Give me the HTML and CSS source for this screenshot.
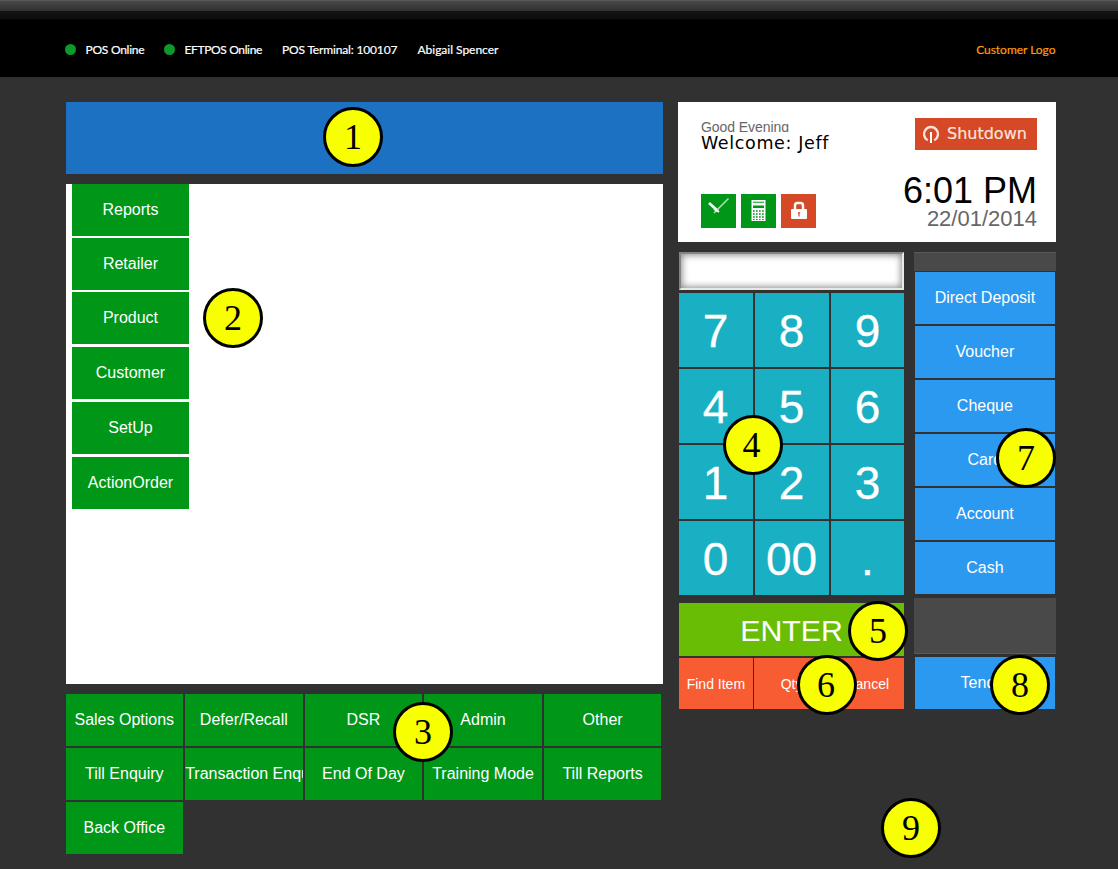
FILE: index.html
```html
<!DOCTYPE html>
<html lang="en">
<head>
<meta charset="utf-8">
<title>POS Terminal</title>
<link rel="stylesheet" href="styles.css">
</head>
<body>
<header class="topbar">
  <div class="status">
    <span class="dot"></span><span class="item pos">POS Online</span>
    <span class="dot"></span><span class="item eft">EFTPOS Online</span>
    <span class="item term">POS Terminal: 100107</span>
    <span class="item user">Abigail Spencer</span>
  </div>
  <div class="logo">Customer Logo</div>
</header>
<main class="page">
  <section class="left">
    <div class="banner"></div>
    <div class="workspace">
      <button class="btn green">Reports</button>
      <button class="btn green">Retailer</button>
      <button class="btn green">Product</button>
      <button class="btn green low">Customer</button>
      <button class="btn green low">SetUp</button>
      <button class="btn green low">ActionOrder</button>
    </div>
    <div class="functions">
      <button class="btn green">Sales Options</button>
      <button class="btn green">Defer/Recall</button>
      <button class="btn green">DSR</button>
      <button class="btn green">Admin</button>
      <button class="btn green">Other</button>
      <button class="btn green">Till Enquiry</button>
      <button class="btn green clipped">Transaction Enquiry</button>
      <button class="btn green">End Of Day</button>
      <button class="btn green">Training Mode</button>
      <button class="btn green">Till Reports</button>
      <button class="btn green">Back Office</button>
    </div>
  </section>
  <section class="right">
    <div class="welcome">
      <div class="welcome-left">
        <div class="greeting">Good Evening</div>
        <div class="name">Welcome: Jeff</div>
        <div class="tools">
          <span class="tool">
            <svg width="35" height="34" viewBox="0 0 35 34"><path d="M8 9l9 8" stroke="#fff" stroke-width="2.6"/><path d="M13 19L27.500 4.500" stroke="#b5e3ba" stroke-width="1.500"/><path d="M13 15l5 3" stroke="#fff" stroke-width="2"/></svg>
          </span>
          <span class="tool">
            <svg width="35" height="34" viewBox="0 0 35 34"><path fill="#fff" d="M10.500 6h14v21h-14z"/><path fill="#009618" d="M12 7.700h11v1.100H12zM12 11.500h11v2.400H12z"/><path d="M12 17h11M12 20h11M12 23h11" stroke="#009618" stroke-width="1.500" stroke-dasharray="1.700 1.300"/><path d="M12 25.600h11" stroke="#009618" stroke-width="1" stroke-dasharray="1.700 1.300"/></svg>
          </span>
          <span class="tool red">
            <svg width="35" height="34" viewBox="0 0 35 34"><path d="M14 16v-4.500q0-2.500 2.500-2.500h3q2.500 0 2.500 2.500V16" fill="none" stroke="#fff" stroke-width="2.400"/><rect x="10" y="15" width="16" height="10" rx="1" fill="#fff"/><path d="M18 18v4.500M17 19h2.200" stroke="#d54926" stroke-width="1.200"/></svg>
          </span>
        </div>
      </div>
      <div class="welcome-right">
        <button class="shutdown">
          <svg width="18" height="20" viewBox="0 0 18 20"><path d="M5.800 16.300A7 7 0 1 1 12.200 16.300" fill="none" stroke="#fbe3dc" stroke-width="2.400"/><path d="M9 8v11" stroke="#fff" stroke-width="2"/></svg>
          <span>Shutdown</span>
        </button>
        <div class="time">6:01 PM</div>
        <div class="date">22/01/2014</div>
      </div>
    </div>
    <div class="entry">
      <div class="keys">
        <div class="display"></div>
        <div class="keypad">
          <button class="key">7</button><button class="key">8</button><button class="key">9</button>
          <button class="key">4</button><button class="key">5</button><button class="key">6</button>
          <button class="key">1</button><button class="key">2</button><button class="key">3</button>
          <button class="key">0</button><button class="key">00</button><button class="key">.</button>
        </div>
        <button class="enter">ENTER</button>
        <div class="actions">
          <button class="action">Find Item</button><button class="action">Qty</button><button class="action">Cancel</button>
        </div>
      </div>
      <div class="payments">
        <div class="slot slot-top"></div>
        <div class="paylist">
          <button class="btn blue">Direct Deposit</button>
          <button class="btn blue">Voucher</button>
          <button class="btn blue">Cheque</button>
          <button class="btn blue">Card</button>
          <button class="btn blue">Account</button>
          <button class="btn blue">Cash</button>
        </div>
        <div class="slot slot-bottom"></div>
        <button class="btn blue tender">Tender</button>
      </div>
    </div>
  </section>
</main>
<div class="marker m1">1</div>
<div class="marker m2">2</div>
<div class="marker m3">3</div>
<div class="marker m4">4</div>
<div class="marker m5">5</div>
<div class="marker m6">6</div>
<div class="marker m7">7</div>
<div class="marker m8">8</div>
<div class="marker m9">9</div>
</body>
</html>
```
FILE: styles.css
```css
* { box-sizing: border-box; }
body {
  margin: 0;
  width: 1118px;
  height: 869px;
  position: relative;
  overflow: hidden;
  background: #313131;
  font-family: "Liberation Sans", Arial, sans-serif;
}
button { border: 0; padding: 0; margin: 0; font-family: inherit; color: #fff; white-space: nowrap; }

.topbar {
  height: 77px;
  padding: 21px 62.500px 0 65px;
  display: flex;
  justify-content: space-between;
  align-items: center;
  background: linear-gradient(#5a5a5a 0, #5a5a5a 1px, #484848 1px, #303030 11px, #131313 11px, #0c0c0c 19px, #000 20px);
  font-family: Lato, sans-serif;
  font-size: 12px;
  color: #fff;
}
.status { display: flex; align-items: center; -webkit-text-stroke: .2px #fff; }
.dot { width: 11px; height: 11px; border-radius: 50%; background: #0c9a2b; margin-right: 9.500px; }
.item { white-space: nowrap; }
.pos { width: 78.500px; letter-spacing: -.25px; }
.eft { width: 97.500px; letter-spacing: -.36px; }
.term { width: 135.500px; letter-spacing: -.16px; }
.user { letter-spacing: -.02px; }
.logo { color: #ff9a0c; -webkit-text-stroke: .2px #ff9a0c; letter-spacing: -.03px; }

.page { display: flex; padding: 25px 0 0 65.600px; gap: 15.300px; }
.left { width: 597.800px; display: flex; flex-direction: column; gap: 10px; }
.banner { height: 72px; background: #1c71c3; }
.workspace {
  height: 500px;
  padding-left: 6.400px;
  background: #fff;
  display: flex;
  flex-direction: column;
  align-items: flex-start;
  gap: 2px;
}
.btn { height: 52px; font-size: 16px; overflow: hidden; }
.green { width: 117px; background: #009618; }
.workspace .low { margin-top: 1px; }
.functions { display: grid; grid-template-columns: repeat(5, 117.400px); gap: 2px 2.200px; }
.functions .green { width: 100%; }
.functions .clipped { text-align: left; }

.right { width: 377.300px; }
.welcome { height: 140px; margin-left: -.400px; background: #fff; display: flex; justify-content: space-between; padding: 16px 19px 0 22.600px; }
.greeting { height: 14px; line-height: 18px; font-size: 14px; color: #666; overflow: hidden; letter-spacing: -.050px; }
.name { font-family: "DejaVu Sans", sans-serif; font-size: 17.500px; letter-spacing: .65px; line-height: 22px; color: #000; }
.tools { display: flex; gap: 5px; margin-top: 40px; }
.tool { width: 35px; height: 34px; background: #009618; }
.tool.red { background: #d54926; }
.tool svg { display: block; }
.welcome-right { display: flex; flex-direction: column; align-items: flex-end; }
.shutdown {
  width: 122px;
  height: 32px;
  display: flex;
  align-items: center;
  padding: 0 0 1px 7px;
  gap: 7px;
  background: #d54926;
  color: #fbe3dc;
  font: 16px "DejaVu Sans", sans-serif;
  -webkit-text-stroke: .2px #fbe3dc;
}
.time { margin-top: 23px; font-size: 36px; line-height: 36px; color: #000; }
.date { font-size: 22px; line-height: 20px; color: #666; }

.entry { display: flex; gap: 9.600px; margin-top: 10px; }
.keys { width: 225.800px; }
.display {
  height: 38px;
  margin-left: .600px;
  border: 2px solid;
  border-color: #85857f #e8e8e4 #e8e8e4 #85857f;
  background: #fff;
  box-shadow: inset 0 0 7px 1px #888;
}
.keypad { margin-top: 3px; display: grid; grid-template-columns: repeat(3, 73.900px); grid-auto-rows: 74px; gap: 2px 2.050px; }
.key { padding-top: 2px; background: #1ab0c3; font-size: 46px; -webkit-text-stroke: .3px #fff; }
.enter { display: block; width: 100%; height: 53px; margin-top: 8px; padding-top: 3px; background: #69be05; font-size: 30.300px; }
.actions { display: grid; grid-template-columns: 74.400px 74.400px 1fr; gap: 1.300px; margin-top: 2px; }
.action { height: 51px; padding-top: 1px; background: #f85c33; font-size: 14px; }
.payments { width: 141.600px; }
.slot { background: #494949; }
.slot-top { height: 19px; border-top: 1px solid #5a5a5a; }
.paylist { display: flex; flex-direction: column; gap: 2px; margin: 1px 1px 4px; }
.slot-bottom { height: 56px; border-bottom: 1px solid #5a5a5a; }
.blue { background: #2c99f0; }
.tender { display: block; width: 140px; margin: 3px 1px 0; }

.marker {
  position: absolute;
  width: 60px;
  height: 60px;
  border: 3px solid #000;
  border-radius: 50%;
  background: #f7ff00;
  color: #000;
  font: 36px/54px "Liberation Serif", serif;
  text-align: center;
}
.m1 { left: 323px; top: 107px; }
.m2 { left: 203px; top: 288px; }
.m3 { left: 393px; top: 702px; }
.m4 { left: 723px; top: 415px; padding-right: 3px; }
.m5 { left: 848px; top: 601px; }
.m6 { left: 797px; top: 655px; padding-right: 2px; }
.m7 { left: 996px; top: 428px; }
.m8 { left: 990px; top: 655px; }
.m9 { left: 881px; top: 798px; }
```
